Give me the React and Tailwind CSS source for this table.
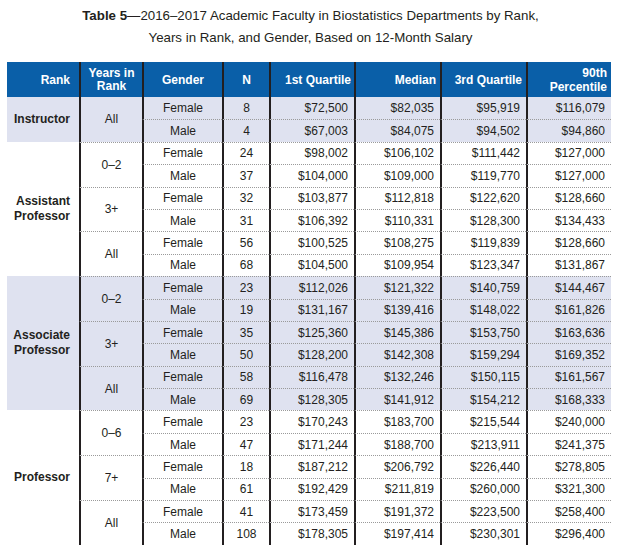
import React from "react";

const groups = [
  {
    rank: ["Instructor"],
    shaded: true,
    sub: [
      { y: "All", rows: [["Female", "8", "$72,500", "$82,035", "$95,919", "$116,079"], ["Male", "4", "$67,003", "$84,075", "$94,502", "$94,860"]] },
    ],
  },
  {
    rank: ["Assistant", "Professor"],
    shaded: false,
    sub: [
      { y: "0–2", rows: [["Female", "24", "$98,002", "$106,102", "$111,442", "$127,000"], ["Male", "37", "$104,000", "$109,000", "$119,770", "$127,000"]] },
      { y: "3+", rows: [["Female", "32", "$103,877", "$112,818", "$122,620", "$128,660"], ["Male", "31", "$106,392", "$110,331", "$128,300", "$134,433"]] },
      { y: "All", rows: [["Female", "56", "$100,525", "$108,275", "$119,839", "$128,660"], ["Male", "68", "$104,500", "$109,954", "$123,347", "$131,867"]] },
    ],
  },
  {
    rank: ["Associate", "Professor"],
    shaded: true,
    sub: [
      { y: "0–2", rows: [["Female", "23", "$112,026", "$121,322", "$140,759", "$144,467"], ["Male", "19", "$131,167", "$139,416", "$148,022", "$161,826"]] },
      { y: "3+", rows: [["Female", "35", "$125,360", "$145,386", "$153,750", "$163,636"], ["Male", "50", "$128,200", "$142,308", "$159,294", "$169,352"]] },
      { y: "All", rows: [["Female", "58", "$116,478", "$132,246", "$150,115", "$161,567"], ["Male", "69", "$128,305", "$141,912", "$154,212", "$168,333"]] },
    ],
  },
  {
    rank: ["Professor"],
    shaded: false,
    sub: [
      { y: "0–6", rows: [["Female", "23", "$170,243", "$183,700", "$215,544", "$240,000"], ["Male", "47", "$171,244", "$188,700", "$213,911", "$241,375"]] },
      { y: "7+", rows: [["Female", "18", "$187,212", "$206,792", "$226,440", "$278,805"], ["Male", "61", "$192,429", "$211,819", "$260,000", "$321,300"]] },
      { y: "All", rows: [["Female", "41", "$173,459", "$191,372", "$223,500", "$258,400"], ["Male", "108", "$178,305", "$197,414", "$230,301", "$296,400"]] },
    ],
  },
];

const vline = "border-l-2 border-l-[#231f20]";
const dot = "border-t border-t-[#9a9a9a] [border-top-style:dotted]";

export default function App() {
  const cells = [];
  groups.forEach((g, gi) => {
    const bg = g.shaded ? "bg-[#dfe2f0]" : "bg-white";
    const span = g.sub.length === 1 ? "row-span-2" : "row-span-6";
    cells.push(
      <div key={`r${gi}`} className={`${span} ${bg} flex flex-col items-end justify-center pr-[9px] font-bold leading-[15px]`}>
        {g.rank.map((t) => (
          <span key={t}>{t}</span>
        ))}
      </div>
    );
    g.sub.forEach((s, si) => {
      const first = gi === 0 && si === 0;
      cells.push(
        <div key={`y${gi}${si}`} className={`row-span-2 ${bg} ${vline} ${first ? "" : dot} flex items-center justify-center`}>
          {s.y}
        </div>
      );
      s.rows.forEach((r, ri) => {
        const top = first && ri === 0 ? "" : dot;
        r.forEach((v, ci) => {
          const align = ci < 2 ? "justify-center" : "justify-end pr-[6px]";
          cells.push(
            <div key={`c${gi}${si}${ri}${ci}`} className={`${bg} ${vline} ${top} flex items-center ${align}`}>
              {v}
            </div>
          );
        });
      });
    });
  });

  return (
    <div className="w-[621px] h-[555px] bg-white text-[#231f20] font-['Liberation_Sans',Arial,sans-serif]">
      <div className="pt-[5px] text-center text-[13.3px] leading-[22px]">
        <div>
          <span className="font-bold">Table 5</span>—2016–2017 Academic Faculty in Biostatistics Departments by Rank,
        </div>
        <div>Years in Rank, and Gender, Based on 12-Month Salary</div>
      </div>
      <div className="mt-[13px] ml-[7px] w-[604px] grid grid-cols-[72px_63px_80px_47px_85px_86px_86px_85px] grid-rows-[35px_repeat(20,22.4px)] text-[12px]">
        <div className="bg-[#0a5fa8] text-white font-bold flex items-center justify-end pr-[9px]">Rank</div>
        <div className={`bg-[#0a5fa8] text-white font-bold ${vline} flex flex-col items-center justify-center leading-[13px]`}>
          <span>Years in</span>
          <span>Rank</span>
        </div>
        <div className={`bg-[#0a5fa8] text-white font-bold ${vline} flex items-center justify-center`}>Gender</div>
        <div className={`bg-[#0a5fa8] text-white font-bold ${vline} flex items-center justify-center`}>N</div>
        <div className={`bg-[#0a5fa8] text-white font-bold ${vline} flex items-center justify-end pr-[3px]`}>1st Quartile</div>
        <div className={`bg-[#0a5fa8] text-white font-bold ${vline} flex items-center justify-end pr-[4px]`}>Median</div>
        <div className={`bg-[#0a5fa8] text-white font-bold ${vline} flex items-center justify-end pr-[4px]`}>3rd Quartile</div>
        <div className={`bg-[#0a5fa8] text-white font-bold ${vline} flex flex-col items-end justify-center pr-[4px] leading-[14px]`}>
          <span>90th</span>
          <span>Percentile</span>
        </div>
        {cells}
      </div>
    </div>
  );
}
